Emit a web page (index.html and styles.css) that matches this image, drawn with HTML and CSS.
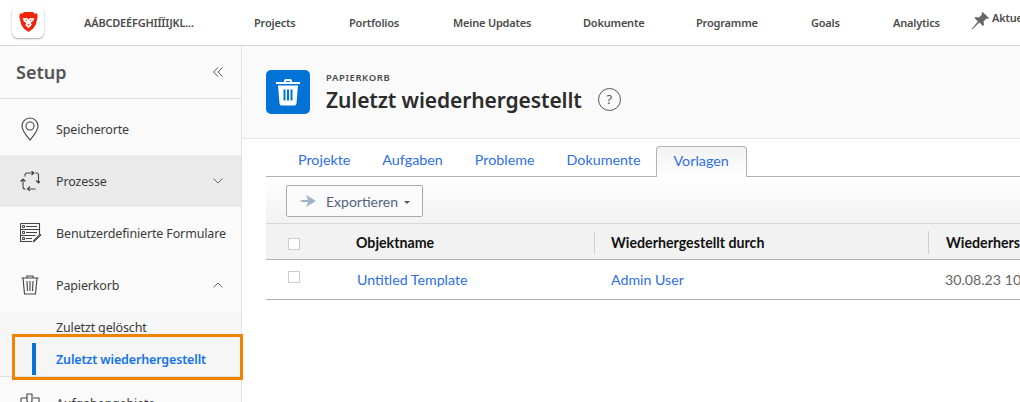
FILE: index.html
```html
<!DOCTYPE html>
<html lang="de">
<head>
    <meta charset="UTF-8">
    <title>Zuletzt wiederhergestellt</title>
    <link rel="stylesheet" href="styles.css">
</head>
<body>
    <div class="topbar">
        <div class="logo">
            <svg width="19" height="20" viewBox="0 0 20 22">
                <path fill="#f0250c" d="M5 0h10l2 2 2.500-.5L20 6l-1 4-1 4-3 4.500L10 22l-5-3.500L2 14 1 10 0 6 .5 1.500 3 2z"/>
                <path fill="#fff" d="M3.500 7 8 6.500l2 1.500 2-1.500 4.500.5-1.500 3-2.500 1.500 1 2.500L10 18l-3.500-3.500 1-2.500L5 10.500z"/>
                <path fill="#f0250c" d="M6 8.500h2.500V10zM14 8.500h-2.500V10zM8.500 13.500h3L10 15z"/>
            </svg>
        </div>
        <nav class="topnav">
            <a class="nav-org">AÁBCDEÉFGHIÍÏĲKL...</a>
            <a class="nav-projects">Projects</a>
            <a class="nav-portfolios">Portfolios</a>
            <a class="nav-updates">Meine Updates</a>
            <a class="nav-docs">Dokumente</a>
            <a class="nav-programs">Programme</a>
            <a class="nav-goals">Goals</a>
            <a class="nav-analytics">Analytics</a>
        </nav>
        <div class="pinned">
            <svg width="18" height="18" viewBox="0 0 18 18">
                <path fill="#666" d="M11.500 0 18 6l-1 1-1.500-.5-3 3 .5 3.500-1 1-3.500-3.500L1 17.500l-.5-.5 6.500-7.500L3.500 6l1-1 3.500.5 3-3L10.500 1z"/>
            </svg>
            <span>Aktuell</span>
        </div>
    </div>

    <div class="layout">
        <aside class="sidebar">
            <div class="sidebar-head">
                <span class="sidebar-title">Setup</span>
                <svg width="10" height="10" viewBox="0 0 10 10">
                    <path fill="none" stroke="#555" d="M5 .5.500 5 5 9.500M9.500.5 5 5l4.500 4.500"/>
                </svg>
            </div>
            <div class="side-item side-first">
                <svg width="20" height="24" viewBox="0 0 20 24">
                    <path fill="none" stroke="#444" stroke-width="1.100" d="M10 23C6 18 2 14 2 9a8 8 0 0 1 16 0c0 5-4 9-8 14z"/>
                    <circle fill="none" stroke="#444" stroke-width="1.100" cx="10" cy="9" r="4"/>
                </svg>
                <span>Speicherorte</span>
            </div>
            <div class="side-item side-active">
                <svg width="20" height="20" viewBox="0 0 20 20">
                    <path fill="none" stroke="#444" stroke-width="1.100" d="M5 5.500V4q0-2 2-2h6.500M11.500 0 14 2l-2.500 2M15.500 2h1q2 0 2 2v7.500M16 9.500l2.500 2.500 2.500-2.500M15 17.500v.5H7.500M10 15.500 7.500 18l2.500 2M3 8v8q0 2 2 2h.5M.5 10.500 3 8l2.500 2.500"/>
                </svg>
                <span>Prozesse</span>
                <svg width="10" height="6" viewBox="0 0 10 6"><path fill="none" stroke="#666" d="m.5.500 4.500 4.500L9.500.5"/></svg>
            </div>
            <div class="side-item">
                <svg width="21" height="20" viewBox="0 0 21 20">
                    <path fill="none" stroke="#444" stroke-width="1.100" d="M.5.500h19v12M12 18.500H.5V.5M.5 6.500h19M.5 12.500h15M6 3.500h11M6 9.500h11M6 15.500h6"/>
                    <path fill="none" stroke="#444" d="M2.500 2.500h2v2h-2zM2.500 8.500h2v2h-2zM2.500 14.500h2v2h-2z"/>
                    <path fill="#777" stroke="#444" d="m14 17 6-6 1 1-6 6-2 1z"/>
                </svg>
                <span>Benutzerdefinierte Formulare</span>
            </div>
            <div class="side-item">
                <svg width="20" height="20" viewBox="-1 0 20 20">
                    <path fill="none" stroke="#444" stroke-width="1.100" d="M.5 3h17M6 3V1h6v2M2 3l1.500 16h11L16 3M6 6l.5 10M9 6v10M12 6l-.5 10"/>
                </svg>
                <span>Papierkorb</span>
                <svg width="10" height="6" viewBox="0 0 10 6"><path fill="none" stroke="#666" d="m.5 5.500L5 1l4.500 4.500"/></svg>
            </div>
            <div class="side-sub">
                <div class="sub-item">Zuletzt gelöscht</div>
                <div class="sub-item sub-current">Zuletzt wiederhergestellt</div>
                <div class="highlight"></div>
            </div>
            <div class="side-item">
                <svg width="20" height="20" viewBox="0 0 20 20">
                    <path fill="none" stroke="#444" stroke-width="1.100" d="M1 5h6M13 5h6v14H1V5M7 1h5v7l-2.500 3L7 8z"/>
                </svg>
                <span>Aufgabengebiete</span>
            </div>
        </aside>

        <main class="main">
            <header class="page-head">
                <div class="page-icon">
                    <svg width="24" height="27" viewBox="0 0 24 27">
                        <path fill="#fff" d="M8 2q0-2 2-2h4q2 0 2 2v1h8v2H0V3h8zm2 0v1h4V2zM2 6.500h20l-1.500 18q-.2 2-2 2h-13q-1.800 0-2-2z"/>
                        <path fill="#0073d6" d="M7.500 10.500h2v11h-2zM11 10.500h2v11h-2zM14.500 10.500h2v11h-2z"/>
                    </svg>
                </div>
                <div class="page-titles">
                    <div class="page-kicker">PAPIERKORB</div>
                    <h1 class="page-title">Zuletzt wiederhergestellt</h1>
                </div>
                <div class="help">?</div>
            </header>

            <div class="content">
                <div class="tabs">
                    <a class="tab">Projekte</a>
                    <a class="tab">Aufgaben</a>
                    <a class="tab">Probleme</a>
                    <a class="tab">Dokumente</a>
                    <a class="tab tab-current">Vorlagen</a>
                </div>
                <div class="toolbar">
                    <button class="export">
                        <svg width="16" height="12" viewBox="0 0 16 12">
                            <path fill="#9db4c8" d="M0 5h8L6 0l10 6-10 6 2-5H0l2-1z"/>
                        </svg>
                        <span>Exportieren</span>
                        <i class="caret"></i>
                    </button>
                </div>
                <div class="grid grid-head">
                    <div class="cell-check"><span class="check"></span></div>
                    <div class="cell-name">Objektname</div>
                    <div class="cell-by">Wiederhergestellt durch</div>
                    <div class="cell-date">Wiederherstellungsdatum</div>
                </div>
                <div class="grid grid-row">
                    <div class="cell-check"><span class="check check-row"></span></div>
                    <div class="cell-name"><a>Untitled Template</a></div>
                    <div class="cell-by"><a>Admin User</a></div>
                    <div class="cell-date">30.08.23 10:15</div>
                </div>
            </div>
        </main>
    </div>
</body>
</html>
```

FILE: styles.css
```css
:root {
    --link: #2d6fe0;
    --side-bg: #fafafa;
    --line: #b3b3b3;
    --text: #2c2c2c;
}

body {
    margin: 0;
    height: 402px;
    overflow: hidden;
    background-color: #fff;
    color: var(--text);
    font-family: 'Noto Sans', 'Open Sans', sans-serif;
}

/* Top bar */
.topbar {
    display: flex;
    align-items: center;
    height: 45px;
    padding-left: 12px;
    background-color: #fff;
    border-bottom: 1px solid #d5d5d5;
    white-space: nowrap;
    overflow: hidden;
}

.logo {
    display: flex;
    align-items: center;
    justify-content: center;
    flex: none;
    width: 32px;
    height: 32px;
    margin-top: -1px;
    background-color: #fff;
    border-radius: 6px;
    box-shadow: 0 1px 2px rgba(0, 0, 0, 0.35);
}

.topnav {
    display: flex;
    margin-left: 40px;
    font-size: 11px;
    font-weight: 600;
    letter-spacing: -0.2px;
    color: #4b4b4b;
}

.nav-org { width: 170px; }
.nav-projects { width: 95px; }
.nav-portfolios { width: 104px; }
.nav-updates { width: 130px; }
.nav-docs { width: 113px; }
.nav-programs { width: 115px; }
.nav-goals { width: 82px; }
.nav-analytics { width: 78px; }

.pinned {
    display: flex;
    align-items: flex-start;
    gap: 3px;
    margin-top: -3px;
    font-size: 11px;
    font-weight: 600;
    letter-spacing: -0.2px;
    color: #4b4b4b;
}

.pinned span {
    margin-top: -2px;
}

.layout {
    display: flex;
    height: 356px;
}

/* Sidebar */
.sidebar {
    flex: none;
    width: 241px;
    background-color: var(--side-bg);
    border-right: 1px solid #e4e4e4;
}

.sidebar-head {
    display: flex;
    align-items: center;
    justify-content: space-between;
    height: 52px;
    padding: 0 18px 0 16px;
    border-bottom: 1px solid #e0e0e0;
}

.sidebar-title {
    font-size: 18px;
    font-weight: 600;
    color: #555;
}

.side-item {
    display: grid;
    grid-template-columns: 36px 1fr auto;
    align-items: center;
    height: 52px;
    padding: 0 18px 0 20px;
    font-size: 12.5px;
    letter-spacing: -0.15px;
    white-space: nowrap;
    color: #3a3a3a;
}

.side-first {
    height: 56px;
    padding-top: 4px;
    box-sizing: border-box;
}

.side-active {
    background-color: #eaeaea;
}

.side-sub {
    position: relative;
    height: 65px;
    background-color: #f6f6f6;
    border-bottom: 1px solid #e0e0e0;
}

.sub-item {
    display: flex;
    align-items: center;
    height: 32px;
    padding-left: 56px;
    font-size: 12.5px;
    letter-spacing: -0.15px;
    color: #3a3a3a;
}

.sub-current {
    position: relative;
    color: #1473e6;
    font-weight: 600;
}

.sub-current::before {
    content: "";
    position: absolute;
    left: 32px;
    top: 0;
    width: 4px;
    height: 32px;
    background-color: #0a73d9;
}

.highlight {
    position: absolute;
    left: 12px;
    top: 23px;
    width: 225px;
    height: 40px;
    border: 3px solid #f08300;
}

/* Main area */
.main {
    flex: 1;
    min-width: 0;
}

.page-head {
    display: flex;
    align-items: flex-start;
    height: 93px;
    padding: 24px 0 0 24px;
    box-sizing: border-box;
    background-color: #fafafa;
    border-bottom: 1px solid #e6e6e6;
}

.page-icon {
    display: flex;
    align-items: center;
    justify-content: center;
    flex: none;
    width: 44px;
    height: 44px;
    background-color: #0073d6;
    border-radius: 5px;
}

.page-titles {
    margin-left: 16px;
}

.page-kicker {
    margin-top: 2px;
    font-size: 9.5px;
    font-weight: 600;
    letter-spacing: 0.6px;
    line-height: 12px;
    color: #4b4b4b;
}

.page-title {
    margin: 1px 0 0;
    font-size: 21px;
    font-weight: 600;
    letter-spacing: -0.1px;
    line-height: 30px;
    color: #2c2c2c;
}

.help {
    width: 23px;
    height: 23px;
    margin: 18px 0 0 16px;
    border: 1px solid #555;
    border-radius: 50%;
    box-sizing: border-box;
    text-align: center;
    font-size: 13px;
    line-height: 21px;
    color: #555;
}

.content {
    margin-left: 24px;
    font-family: Lato, 'Liberation Sans', sans-serif;
}

.tabs {
    display: flex;
    align-items: flex-end;
    height: 37px;
    padding-left: 16px;
    border-bottom: 1px solid var(--line);
}

.tab {
    display: block;
    height: 30px;
    padding: 0 16px;
    line-height: 28px;
    font-size: 14.3px;
    color: var(--link);
}

.tab-current {
    position: relative;
    top: 1px;
    margin-left: -1px;
    padding: 0 17px;
    border: 1px solid var(--line);
    border-bottom: none;
    border-radius: 4px 4px 0 0;
    background: linear-gradient(#f2f2f2, #fff);
}

.toolbar {
    height: 47px;
    padding: 8px 0 0 20px;
    box-sizing: border-box;
    background: linear-gradient(#fff, #f2f2f2);
    border-bottom: 1px solid #d8d8d8;
}

.export {
    display: flex;
    align-items: center;
    width: 137px;
    height: 32px;
    padding: 0 0 0 13px;
    background-color: #fbfbfb;
    border: 1px solid #aaa;
    border-radius: 2px;
    font-family: inherit;
    font-size: 14px;
    color: #53647f;
}

.export span {
    margin-left: 10px;
}

.caret {
    margin-left: 6px;
    margin-top: 2px;
    border-top: 3px solid #555;
    border-left: 3px solid transparent;
    border-right: 3px solid transparent;
}

.grid {
    display: flex;
    align-items: center;
    white-space: nowrap;
    overflow: hidden;
    font-size: 14.2px;
}

.grid-head {
    height: 35px;
    background-color: #f2f2f2;
    border-bottom: 1px solid var(--line);
    font-weight: 700;
    color: #111;
}

.grid-row {
    height: 39px;
    border-bottom: 1px solid var(--line);
    color: #666;
}

.grid a {
    margin-left: 1px;
    color: var(--link);
}

.cell-check {
    flex: none;
    width: 90px;
    padding-left: 22px;
    box-sizing: border-box;
}

.cell-name {
    flex: none;
    width: 238px;
}

.cell-by {
    flex: none;
    width: 334px;
    padding-left: 16px;
    box-sizing: border-box;
}

.cell-date {
    padding-left: 17px;
}

.grid-head .cell-by,
.grid-head .cell-date {
    border-left: 1px solid #d0d0d0;
    line-height: 23px;
}

.grid-head .cell-name,
.grid-head .cell-by,
.grid-head .cell-date {
    margin-top: 2px;
}

.check {
    display: block;
    width: 10px;
    height: 10px;
    margin-top: 4px;
    background-color: #fff;
    border: 1px solid #ccc;
}

.check-row {
    margin-top: -5px;
}
```
